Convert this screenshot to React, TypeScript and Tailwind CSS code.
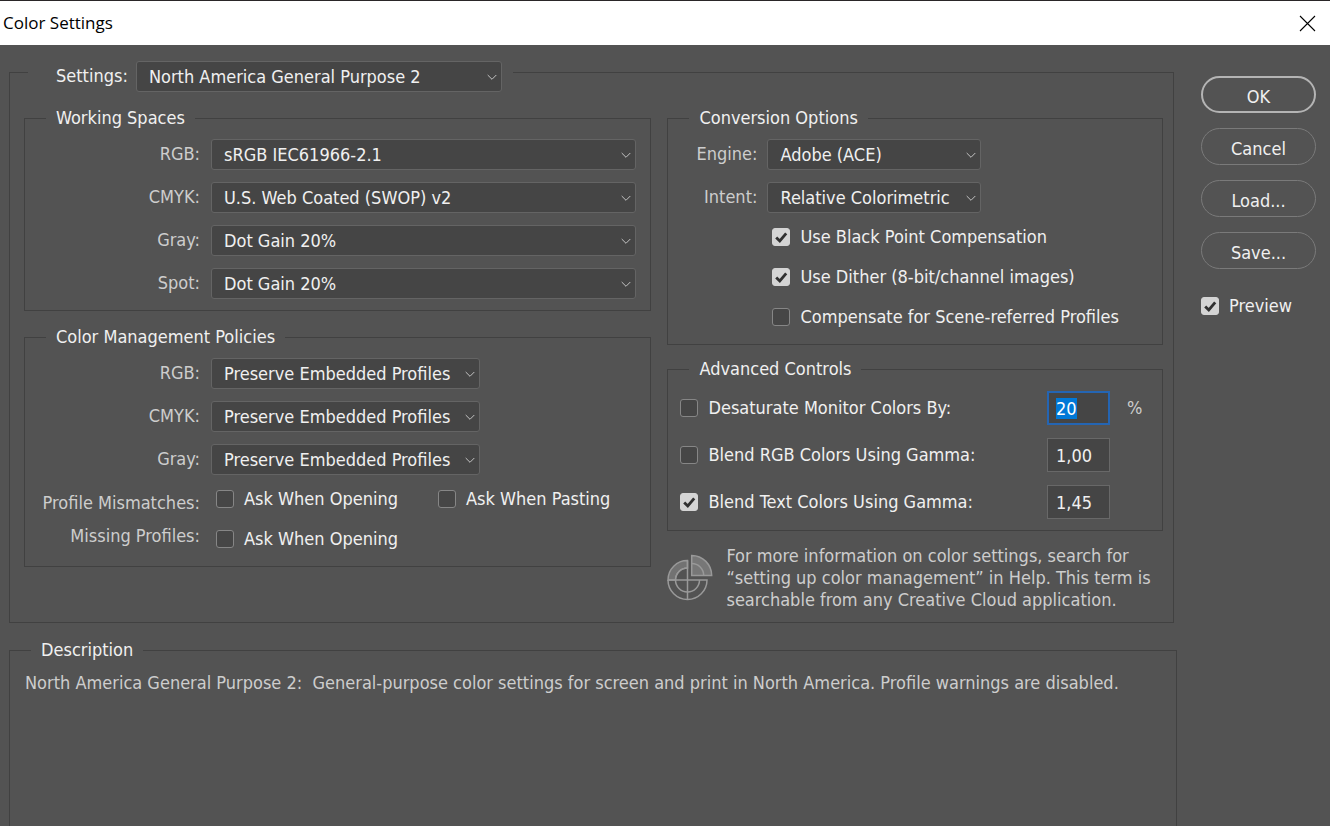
import { useEffect, useRef } from "react";
import type { ReactNode } from "react";

type SelectProps = {
  id: string;
  options: string[];
  className?: string;
};

const workingSpaces = [
  { id: "ws-rgb", label: "RGB:", options: ["sRGB IEC61966-2.1"] },
  { id: "ws-cmyk", label: "CMYK:", options: ["U.S. Web Coated (SWOP) v2"] },
  { id: "ws-gray", label: "Gray:", options: ["Dot Gain 20%"] },
  { id: "ws-spot", label: "Spot:", options: ["Dot Gain 20%"] },
];

const policies = [
  { id: "cm-rgb", label: "RGB:" },
  { id: "cm-cmyk", label: "CMYK:" },
  { id: "cm-gray", label: "Gray:" },
];

const fieldClass =
  "w-[63px] h-[34px] border bg-[#454545] px-2 text-[#f0f0f0] leading-[22px] outline-none border-[#686868] focus:border-[#2465b3] focus:border-2 focus:px-[7px] selection:bg-[#0078d7] selection:text-white";

function Select({ id, options, className = "" }: SelectProps) {
  return (
    <div className={`relative ${className}`}>
      <select
        id={id}
        className="block w-full h-[31px] appearance-none rounded-[3px] border border-[#646464] bg-[#454545] pl-3 pr-6 leading-[22px] text-[#f0f0f0] outline-none"
      >
        {options.map((o) => (
          <option key={o}>{o}</option>
        ))}
      </select>
      <svg
        className="pointer-events-none absolute right-[5px] top-3 h-[8px] w-[10px]"
        viewBox="0 0 10 8"
        fill="none"
        stroke="#c4c4c4"
      >
        <path d="M0.7 2 L5 6.3 L9.3 2" />
      </svg>
    </div>
  );
}

function Check({ id, label, checked = false }: { id: string; label: string; checked?: boolean }) {
  return (
    <div className="flex items-center gap-[10px]">
      <span className="relative size-[18px] shrink-0">
        <input
          id={id}
          type="checkbox"
          defaultChecked={checked}
          className="peer block size-[18px] appearance-none rounded-[3px] border border-[#868686] bg-[#464646] checked:border-[#d4d4d4] checked:bg-[#d4d4d4]"
        />
        <svg
          className="pointer-events-none absolute inset-0 hidden size-[18px] peer-checked:block"
          viewBox="0 0 18 18"
          fill="none"
          stroke="#303030"
          strokeWidth="2.8"
        >
          <path d="M4.2 9.4 L7.8 13 L14.2 5.4" />
        </svg>
      </span>
      <label htmlFor={id} className="whitespace-nowrap">
        {label}
      </label>
    </div>
  );
}

function Group({ title, className = "", children }: { title: string; className?: string; children: ReactNode }) {
  return (
    <fieldset className={`min-w-0 border border-[#414141] ${className}`}>
      <legend className="ml-[21px] px-[10px]">{title}</legend>
      {children}
    </fieldset>
  );
}

function RowLabel({ id, className, children }: { id: string; className: string; children: ReactNode }) {
  return (
    <label htmlFor={id} className={`shrink-0 pb-[2px] text-right text-[#cdcdcd] ${className}`}>
      {children}
    </label>
  );
}

function PieIcon() {
  return (
    <svg className="h-[48px] w-[47px] shrink-0" viewBox="0 0 47 48" fill="none" stroke="#999999" strokeWidth="1.5">
      <path d="M20.5 6.5 A19.5 19.5 0 0 0 1 26 H8.5 A12 12 0 0 1 20.5 14 Z" fill="#727272" />
      <path d="M20.5 6.5 V45.5" />
      <path d="M1 26 H40 A19.5 19.5 0 0 1 1 26" />
      <path d="M20.5 14 A12 12 0 0 0 20.5 38 A12 12 0 0 0 32.5 26" />
      <path d="M24.7 1.5 A20 20 0 0 1 44.7 21.5 H24.7 Z" fill="#777777" />
      <path d="M24.7 9.5 A12 12 0 0 1 36.7 21.5" />
    </svg>
  );
}

export default function App() {
  const desaturateRef = useRef<HTMLInputElement>(null);

  // the first number field starts focused with its value selected
  useEffect(() => {
    desaturateRef.current?.focus();
    desaturateRef.current?.select();
  }, []);

  return (
    <div className="flex min-h-screen flex-col bg-[#535353] font-['DejaVu_Sans_Condensed','Noto_Sans',sans-serif] text-[18px] leading-[22px] text-[#f0f0f0]">
      <header className="flex h-[45px] items-center justify-between border-t border-[#2a2628] bg-white pl-[3px] pr-[14px] text-black">
        <h1 className="font-['Open_Sans',sans-serif] text-[17px]">Color Settings</h1>
        <button type="button" aria-label="Close">
          <svg className="size-[17px]" viewBox="0 0 17 17" stroke="#000" strokeWidth="1.1">
            <path d="M1 1 L16 16 M16 1 L1 16" />
          </svg>
        </button>
      </header>

      <div className="flex flex-1 gap-6 pl-[9px] pr-[14px] pt-2">
        <main className="flex min-w-0 flex-1 flex-col">
          <fieldset className="mr-[3px] min-w-0 border border-[#414141] pb-[11px] pl-[14px] pr-[10px]">
            <legend className="ml-[4px] flex items-center gap-2 pl-7 pr-[11px] pt-2">
              <label htmlFor="settings" className="pb-[2px]">
                Settings:
              </label>
              <Select id="settings" options={["North America General Purpose 2"]} className="w-[366px]" />
            </legend>

            <div className="grid grid-cols-[628fr_496fr] gap-4 pt-[15px]">
              <div className="flex min-w-0 flex-col gap-[15px]">
                <Group title="Working Spaces" className="pb-[11px] pr-[14px]">
                  <div className="flex flex-col gap-3 pt-[10px]">
                    {workingSpaces.map((w) => (
                      <div key={w.id} className="flex items-center gap-[11px]">
                        <RowLabel id={w.id} className="w-[175px]">
                          {w.label}
                        </RowLabel>
                        <Select id={w.id} options={w.options} className="flex-1" />
                      </div>
                    ))}
                  </div>
                </Group>

                <Group title="Color Management Policies" className="pb-[14px] pr-[14px]">
                  <div className="flex flex-col gap-3 pt-[10px]">
                    {policies.map((p) => (
                      <div key={p.id} className="flex items-center gap-[11px]">
                        <RowLabel id={p.id} className="w-[175px]">
                          {p.label}
                        </RowLabel>
                        <Select id={p.id} options={["Preserve Embedded Profiles"]} className="w-[269px]" />
                      </div>
                    ))}
                  </div>
                  <div className="flex items-center gap-4 pt-[11px]">
                    <div className="w-[175px] shrink-0 whitespace-nowrap text-right leading-[33px] text-[#cdcdcd]">
                      <p>Profile Mismatches:</p>
                      <p>Missing Profiles:</p>
                    </div>
                    <div className="flex flex-col gap-[18px]">
                      <div className="flex gap-10">
                        <Check id="mismatch-open" label="Ask When Opening" />
                        <Check id="mismatch-paste" label="Ask When Pasting" />
                      </div>
                      <Check id="missing-open" label="Ask When Opening" />
                    </div>
                  </div>
                </Group>
              </div>

              <div className="flex min-w-0 flex-col">
                <Group title="Conversion Options" className="pb-[16px]">
                  <div className="flex flex-col gap-3 pt-[10px]">
                    <div className="flex items-center gap-[10px]">
                      <RowLabel id="engine" className="w-[89px]">
                        Engine:
                      </RowLabel>
                      <Select id="engine" options={["Adobe (ACE)"]} className="w-[214px]" />
                    </div>
                    <div className="flex items-center gap-[10px]">
                      <RowLabel id="intent" className="w-[89px]">
                        Intent:
                      </RowLabel>
                      <Select id="intent" options={["Relative Colorimetric"]} className="w-[214px]" />
                    </div>
                  </div>
                  <div className="flex flex-col gap-[18px] pl-[104px] pt-[13px]">
                    <Check id="bpc" label="Use Black Point Compensation" checked />
                    <Check id="dither" label="Use Dither (8-bit/channel images)" checked />
                    <Check id="scene" label="Compensate for Scene-referred Profiles" />
                  </div>
                </Group>

                <Group title="Advanced Controls" className="mt-[13px] pb-[11px]">
                  <div className="flex flex-col gap-[13px] pl-3 pt-[11px]">
                    <div className="flex items-center">
                      <Check id="desaturate" label="Desaturate Monitor Colors By:" />
                      <input
                        ref={desaturateRef}
                        aria-label="Desaturate amount"
                        defaultValue="20"
                        className={`ml-auto ${fieldClass}`}
                      />
                      <span className="w-[52px] pl-[17px] text-[#cdcdcd]">%</span>
                    </div>
                    <div className="flex items-center pr-[52px]">
                      <Check id="blend-rgb" label="Blend RGB Colors Using Gamma:" />
                      <input aria-label="RGB gamma" defaultValue="1,00" className={`ml-auto ${fieldClass}`} />
                    </div>
                    <div className="flex items-center pr-[52px]">
                      <Check id="blend-text" label="Blend Text Colors Using Gamma:" checked />
                      <input aria-label="Text gamma" defaultValue="1,45" className={`ml-auto ${fieldClass}`} />
                    </div>
                  </div>
                </Group>

                <div className="flex items-center gap-3 pt-[14px]">
                  <PieIcon />
                  <p className="whitespace-nowrap text-[#cdcdcd]">
                    For more information on color settings, search for
                    <br />
                    “setting up color management” in Help. This term is
                    <br />
                    searchable from any Creative Cloud application.
                  </p>
                </div>
              </div>
            </div>
          </fieldset>

          <Group title="Description" className="mt-4 flex-1 border-b-0">
            <p className="whitespace-pre-wrap pl-[15px] pt-[11px] text-[#cdcdcd]">
              {"North America General Purpose 2:  General-purpose color settings for screen and print in North America. Profile warnings are disabled."}
            </p>
          </Group>
        </main>

        <aside className="flex w-[115px] shrink-0 flex-col gap-[15px] pt-[23px]">
          <button type="button" className="h-[37px] rounded-full border-2 border-[#b4b4b4] pt-1">
            OK
          </button>
          {["Cancel", "Load...", "Save..."].map((t) => (
            <button key={t} type="button" className="h-[37px] rounded-full border border-[#7a7a7a] pt-1">
              {t}
            </button>
          ))}
          <div className="pt-[11px]">
            <Check id="preview" label="Preview" checked />
          </div>
        </aside>
      </div>
    </div>
  );
}
